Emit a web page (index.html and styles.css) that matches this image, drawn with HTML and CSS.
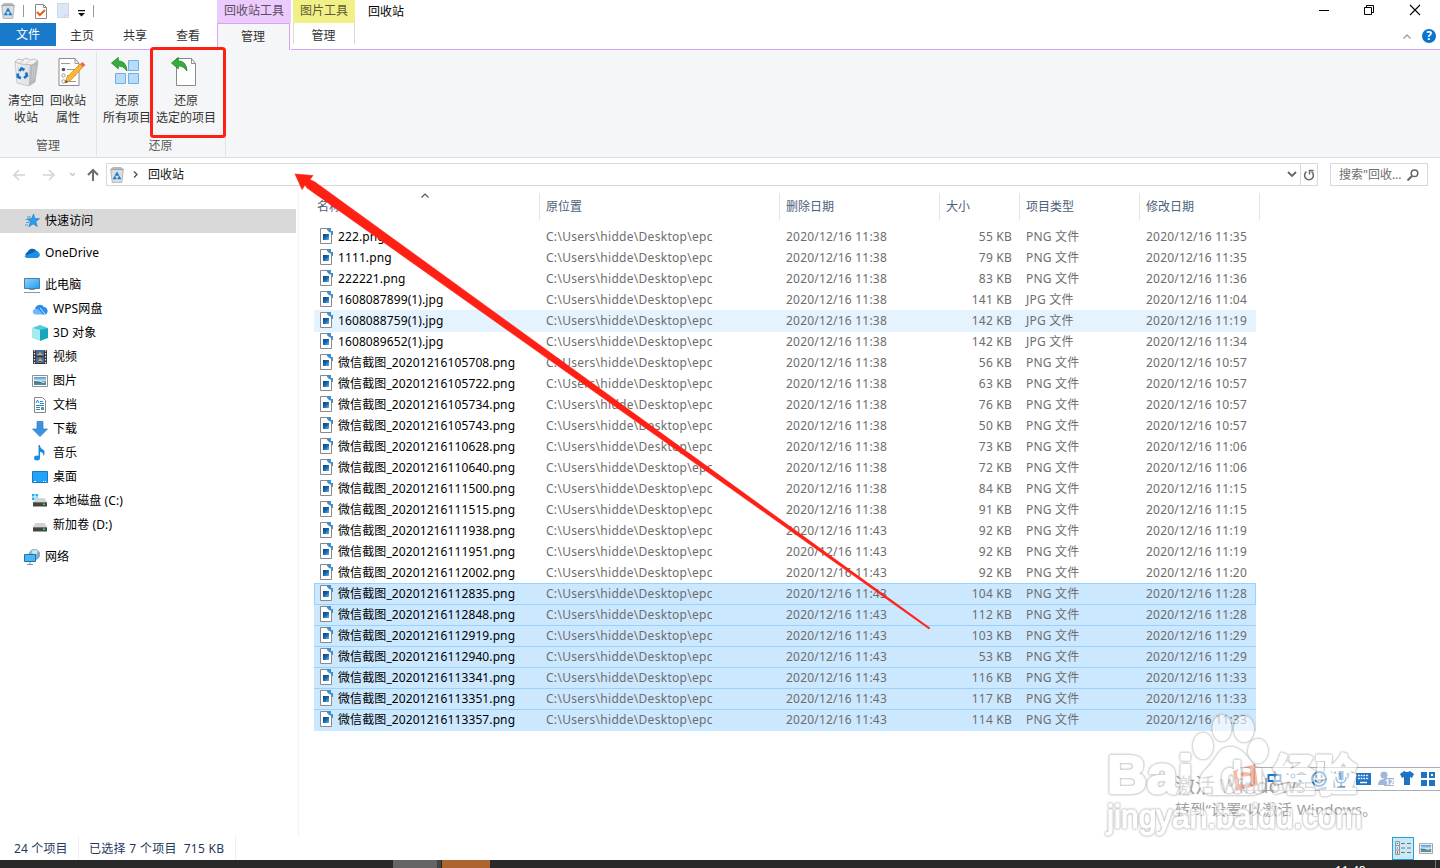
FILE: index.html
```html
<!DOCTYPE html>
<html lang="zh-CN">
<head>
<meta charset="utf-8">
<title>回收站</title>
<link rel="stylesheet" href="styles.css">
</head>
<body>
<svg class="defs" width="0" height="0">
  <defs>
    <linearGradient id="g-sky" x1="0" y1="0" x2="1" y2="1"><stop offset="0" stop-color="#8fd6ff"/><stop offset="1" stop-color="#1d9bf0"/></linearGradient>
    <linearGradient id="g-pic" x1="0" y1="0" x2="0" y2="1"><stop offset="0" stop-color="#4a94dd"/><stop offset=".5" stop-color="#cfe6f6"/><stop offset=".6" stop-color="#4c7a78"/><stop offset="1" stop-color="#4a90bd"/></linearGradient>
    <linearGradient id="g-file" x1="0" y1="0" x2="1" y2="1"><stop offset="0" stop-color="#0b3f7c"/><stop offset=".5" stop-color="#1767ad"/><stop offset="1" stop-color="#62b5e8"/></linearGradient>
    <linearGradient id="g-bin" x1="0" y1="0" x2="1" y2="0"><stop offset="0" stop-color="#eef0f1"/><stop offset=".6" stop-color="#dfe2e4"/><stop offset="1" stop-color="#a9adb0"/></linearGradient>
    <symbol id="file" viewBox="0 0 14 16">
      <path d="M.5.5h8l3 3v12H.5z" fill="#fff" stroke="#8a8a8a"/>
      <path d="M3 6h6v6H3z" fill="url(#g-file)"/>
      <path d="M7 0h4v3h2v4h-1V5L9 4 7 2z" fill="#3f8fce"/>
    </symbol>
    <symbol id="bin" viewBox="0 0 14 16">
      <path d="M.7 2.5h12.6L11.8 15.4H2.2z" fill="#dcdfe1" stroke="#a5a9ac" stroke-width=".8"/>
      <path d="M.6 2.6 3 .6h8l2.4 2z" fill="#b9bcbe" stroke="#999" stroke-width=".6"/>
      <path d="m7 5 2 3.500H5zM4.800 9 6.500 12H3zM9.200 9 11 12H7.600z" fill="#1c7fd0" stroke="#1c7fd0" stroke-width=".6"/>
    </symbol>
    <symbol id="picture" viewBox="0 0 16 12">
      <path d="M.5.5h15v11H.5z" fill="#fff" stroke="#909090"/>
      <path d="M2 2h12v8H2z" fill="url(#g-pic)"/><path d="M2 5q5 0 12 3H2z" fill="#d8edf7"/><path d="M2 6q6 0 9 2H2z" fill="#4b7b70"/>
    </symbol>
    <symbol id="drive" viewBox="0 0 14 9">
      <path d="M2.500 0h9L14 4H0z" fill="#d4d4d4"/><path d="M0 4h14v4.500H0z" fill="#444"/><path d="M0 4h14v1H0z" fill="#777"/><path d="M10 5.500h2v1.500h-2z" fill="#39e24a"/>
    </symbol>
    <symbol id="undo" viewBox="0 0 17 15">
      <path d="M.5 6 7.300.500V4Q15 3.500 16 14 12.500 8.500 7.300 8.800v3z" fill="#35ad3b" stroke="#168321" stroke-width=".8"/>
    </symbol>
  </defs>
</svg>

<div class="window">
  <header class="caption">
    <div class="caption-left">
      <div class="quick">
        <svg class="q-bin" width="14" height="16"><use href="#bin"/></svg>
        <i class="q-sep"></i>
        <svg class="q-check" width="12" height="15" viewBox="0 0 12 15"><path d="M.5.5h8l3 3v11H.5z" fill="#fff" stroke="#888"/><path d="M8.500.500v3h3" fill="none" stroke="#888"/><path d="m2 8 2.800 3L10 6" fill="none" stroke="#ee5a16" stroke-width="2"/></svg>
        <svg class="q-page" width="13" height="16" viewBox="0 0 13 16"><path d="M.5.5h11v14H.5z" fill="#dbe7f6" stroke="#c9d8ec"/><path d="M8 15v-3h4" fill="#eef4fb" stroke="#c0cde0"/></svg>
        <svg class="q-drop" width="7" height="7" viewBox="0 0 7 7"><path d="M0 0h7v1.300H0zM0 3h7L3.500 6.500z" fill="#111"/></svg>
        <i class="q-sep last"></i>
      </div>
      <nav class="tabs"><a class="tab file">文件</a><a class="tab">主页</a><a class="tab">共享</a><a class="tab">查看</a></nav>
    </div>
    <div class="context bin-tools"><div class="context-title">回收站工具</div><a class="context-tab">管理</a></div>
    <div class="context pic-tools"><div class="context-title">图片工具</div><a class="context-tab">管理</a></div>
    <div class="caption-right">
      <div class="title-row">
        <span class="title">回收站</span>
        <svg class="controls" width="102" height="12" viewBox="0 0 102 12" fill="none" stroke="#000" stroke-width="1"><path d="M0 6.500h10"/><path d="M45.500 3.500h7v7h-7zM47.500 3.500v-2h7v7h-2"/><path d="m91 1 10 10M101 1 91 11" stroke-width="1.100"/></svg>
      </div>
      <div class="help-row">
        <svg width="8" height="5" viewBox="0 0 8 5"><path d="m.5 4.500 3.500-3.500 3.500 3.500" fill="none" stroke="#a0a0a0" stroke-width="1.400"/></svg>
        <span class="help">?</span>
      </div>
    </div>
  </header>

  <section class="ribbon">
    <div class="group manage">
      <div class="items">
        <div class="item empty-bin">
          <svg width="28" height="30" viewBox="0 0 28 30"><path d="m3 5 15 2 8-3-3 21-6 4-12-3z" fill="url(#g-bin)" stroke="#b4b7ba" stroke-width=".7"/><path d="m18 7 8-3-3 21-6 4z" fill="#b5b9bc"/><path d="m3 5 3-3 5 1 3-2 4 2 4-1 4 2-6 4-11-1z" fill="#f1f1f1" stroke="#a8a8a8" stroke-width=".7"/><path d="m8 6 4-3m2 4 3-3m4 5-1 14m3-15-1 13M6 9l2 14" stroke="#c9ccce" fill="none"/><path d="m7.500 14 2-2.500 3 1.500M14 15.500l1 3-3 2.500M9 21l-3-1-.500-3.500" fill="none" stroke="#1673c8" stroke-width="2.600"/></svg>
          <span>清空回<br>收站</span>
        </div>
        <div class="item bin-props">
          <svg width="28" height="30" viewBox="0 0 28 30"><path d="M1 1.500h16l4 5v22H1z" fill="#fff" stroke="#8b8b8b"/><path d="M17 1.500v5h4M3 6.500h9M9 12.500h9M9 18.500h9M9 24.500h9" stroke="#999" fill="none"/><circle cx="5.500" cy="12.500" r="1.800" fill="#555"/><circle cx="5.500" cy="18.500" r="1.700" fill="none" stroke="#999"/><circle cx="5.500" cy="24.500" r="1.700" fill="none" stroke="#999"/><path d="m7 26 2-6L22 7l3 3-13 14z" fill="#f6b936" stroke="#d58a1c" stroke-width=".7"/><path d="m22 7 2.500-2 3 3-2.500 2z" fill="#e36a56"/><path d="m7 26 1-3 2 2z" fill="#444"/></svg>
          <span>回收站<br>属性</span>
        </div>
      </div>
      <div class="group-name">管理</div>
    </div>
    <div class="group restore">
      <div class="items">
        <div class="item restore-all">
          <svg width="28" height="30" viewBox="0 0 28 30"><path d="M17.500 3.500h10v10h-10zM4.500 16.500h10v10h-10zM17.500 16.500h10v10h-10z" fill="#b6dcf8" stroke="#72afe0"/><use href="#undo" x="0" y="0" width="17" height="15"/></svg>
          <span>还原<br>所有项目</span>
        </div>
        <div class="item restore-one">
          <svg width="27" height="30" viewBox="0 0 27 30"><path d="M5.500 1.500h15l4 5v22h-19z" fill="#fff" stroke="#8b8b8b"/><path d="M20.500 1.500v5h4" fill="none" stroke="#8b8b8b"/><use href="#undo" x="0" y="0" width="17" height="15"/></svg>
          <span>还原<br>选定的项目</span>
        </div>
      </div>
      <div class="group-name">还原</div>
    </div>
  </section>

  <div class="address">
    <svg class="history" width="88" height="14" viewBox="0 0 88 14" fill="none"><path d="M13 7H2m5-5L2 7l5 5M31 7h11m-5-5 5 5-5 5" stroke="#d4d4d4" stroke-width="1.600"/><path d="m58 5 2.500 2.500L63 5" stroke="#c4c4c4" stroke-width="1.300"/><path d="M81 13V2m-5 5 5-5 5 5" stroke="#6d6d6d" stroke-width="2"/></svg>
    <div class="path">
      <svg width="14" height="16"><use href="#bin"/></svg>
      <svg class="crumb" width="5" height="7" viewBox="0 0 5 7"><path d="m1 .5 3 3-3 3" fill="none" stroke="#555" stroke-width="1.400"/></svg>
      <span>回收站</span>
      <svg class="expand" width="10" height="7" viewBox="0 0 10 7"><path d="m1 1 4 4 4-4" fill="none" stroke="#666" stroke-width="1.800"/></svg>
      <div class="refresh"><svg width="12" height="12" viewBox="0 0 12 12"><path d="M8.500 2.700A4.400 4.400 0 1 1 3.500 2.700" fill="none" stroke="#6a6a6a" stroke-width="1.600"/><path d="M1.500 1.500h4v4" fill="none" stroke="#6a6a6a" stroke-width="1.500"/></svg></div>
    </div>
    <div class="search"><span>搜索"回收...</span><svg width="12" height="12" viewBox="0 0 12 12" fill="none" stroke="#666"><circle cx="7.500" cy="4.300" r="3.300" stroke-width="1.500"/><path d="m5 7-4.500 4.500" stroke-width="2"/></svg></div>
  </div>

  <main class="body">
    <aside class="nav">
      <div class="node selected"><svg width="16" height="16" viewBox="0 0 16 16"><path d="m9.500 1 1.400 4.500 4.600.2-3.700 2.900 1.500 5-4.200-2.700-4.300 2.900 1.600-4.900L3 6l4.700-.5z" fill="#2c9cec" stroke="#1979c4" stroke-width=".6"/><path d="M3 4h4M1.500 6.500h3M2 9.500h3M1 12h3" stroke="#4a9bd6"/></svg>快速访问</div>
      <div class="node"><svg width="16" height="16" viewBox="0 0 16 16"><path d="M3.500 7A5 5 0 0 1 12 5.500 4 4 0 0 1 15 9l-4 4H3.500a3.200 3.200 0 0 1 0-6" fill="#0b61b9"/><path d="M8 8q4-3 6.500-.5A3 3 0 0 1 13 13H3.500Q1 13 .5 11z" fill="#1a91e2"/></svg>OneDrive</div>
      <div class="node"><svg width="16" height="16" viewBox="0 0 16 16"><path d="M.5 1.500h15v10H.5z" fill="url(#g-sky)" stroke="#4c7fa7"/><path d="M5 12.500h6M0 15.500h16" stroke="#8399ab" stroke-width="1"/></svg>此电脑</div>
      <div class="node child"><svg width="16" height="16" viewBox="0 0 16 16"><path d="M3 8a5 5 0 0 1 9-2 4 4 0 0 1 1.500 7.500H10L5 8z" fill="#2c8cf0"/><path d="M3 8q3-1 5 2l3 3.500H3A2.800 2.800 0 0 1 3 8" fill="#70b8fa"/><path d="m8 7 5 6" stroke="#fff" stroke-width=".8"/></svg>WPS网盘</div>
      <div class="node child"><svg width="16" height="16" viewBox="0 0 16 16"><path d="m0 3 8-3 8 3-8 3z" fill="#56c9d8"/><path d="m0 3 8 2v11l-8-3z" fill="#a4ecee"/><path d="m16 3-8 2v11l8-3z" fill="#16a7bb"/></svg>3D 对象</div>
      <div class="node child"><svg width="16" height="16" viewBox="0 0 16 16"><path d="M1 1h14v14H1z" fill="#333"/><path d="M4 1h8v6H4zM4 8h8v6H4z" fill="#426da8"/><path d="m5 6 3-3 3 3zM6 12l2-3 3 3z" fill="#e0a237"/><path d="M2.500 1v14M13.500 1v14" stroke="#eee" stroke-width="1.200" stroke-dasharray="1.500 1.500"/></svg>视频</div>
      <div class="node child"><svg width="16" height="12"><use href="#picture"/></svg>图片</div>
      <div class="node child"><svg width="16" height="16" viewBox="0 0 16 16"><path d="M2.500.5h8l3 3v12h-11z" fill="#fff" stroke="#888"/><path d="m4 6 1.500-3L7 6M8 4.500h3M8 6.500h4M4 8.500h8M4 10.500h4M4 12.500h4" stroke="#2a86cb" fill="none"/><path d="M9 10h3v3H9z" fill="#5c968b"/></svg>文档</div>
      <div class="node child"><svg width="16" height="16" viewBox="0 0 16 16"><path d="M5 .5h6V8h4.500L8 15.500.5 8H5z" fill="#3b93df" stroke="#297bc4" stroke-width=".7"/></svg>下载</div>
      <div class="node child"><svg width="16" height="16" viewBox="0 0 16 16"><ellipse cx="5" cy="13" rx="3" ry="2.500" fill="#168de2"/><path d="M6.500 0H8q0 3 3 4.500 3 2.500.5 6.500 0-4-3.500-4v6H6.500z" fill="#168de2"/></svg>音乐</div>
      <div class="node child"><svg width="16" height="12" viewBox="0 0 16 12"><path d="M.5.500h15v11H.5z" fill="#22a3fa" stroke="#187ac3"/><path d="M2 10.500h2m7 0h1m1 0h1" stroke="#fff"/></svg>桌面</div>
      <div class="node child"><svg width="16" height="16" viewBox="0 0 16 16"><path d="M0 1h2.500v2.500H0zM3.500 1H6v2.500H3.500zM0 4.500h2.500V7H0zM3.500 4.500H6V7H3.500z" fill="#18b4f1"/><use href="#drive" x="1" y="5" width="14" height="9"/></svg>本地磁盘 (C:)</div>
      <div class="node child"><svg width="16" height="16" viewBox="0 0 16 16"><use href="#drive" x="1" y="6" width="14" height="9"/></svg>新加卷 (D:)</div>
      <div class="node network"><svg width="16" height="16" viewBox="0 0 16 16"><circle cx="10.500" cy="5.500" r="5.300" fill="#78b2d0" stroke="#5a87a4" stroke-width=".5"/><path d="M7 3q3-4 7-1l-2 4-3-1z" fill="#c9e5ec"/><path d="M.5 5.500h11v7H.5z" fill="#48b6fb" stroke="#28709e"/><path d="M3 15.500h6M6 13v2" stroke="#7896a8"/></svg>网络</div>
    </aside>

    <section class="files">
      <div class="head">
        <span>名称</span><span>原位置</span><span>删除日期</span><span>大小</span><span>项目类型</span><span>修改日期</span>
        <svg class="sort" width="8" height="5" viewBox="0 0 8 5"><path d="M.5 4.500 4 1l3.500 3.500" fill="none" stroke="#555" stroke-width="1.200"/></svg>
      </div>
      <div class="rows">
        <div class="row"><svg><use href="#file"/></svg><b>222.png</b><span class="loc">C:\Users\hidde\Desktop\epc</span><span>2020/12/16 11:38</span><span class="size">55 KB</span><span>PNG 文件</span><span>2020/12/16 11:35</span></div>
        <div class="row"><svg><use href="#file"/></svg><b>1111.png</b><span class="loc">C:\Users\hidde\Desktop\epc</span><span>2020/12/16 11:38</span><span class="size">79 KB</span><span>PNG 文件</span><span>2020/12/16 11:35</span></div>
        <div class="row"><svg><use href="#file"/></svg><b>222221.png</b><span class="loc">C:\Users\hidde\Desktop\epc</span><span>2020/12/16 11:38</span><span class="size">83 KB</span><span>PNG 文件</span><span>2020/12/16 11:36</span></div>
        <div class="row"><svg><use href="#file"/></svg><b>1608087899(1).jpg</b><span class="loc">C:\Users\hidde\Desktop\epc</span><span>2020/12/16 11:38</span><span class="size">141 KB</span><span>JPG 文件</span><span>2020/12/16 11:04</span></div>
        <div class="row hover"><svg><use href="#file"/></svg><b>1608088759(1).jpg</b><span class="loc">C:\Users\hidde\Desktop\epc</span><span>2020/12/16 11:38</span><span class="size">142 KB</span><span>JPG 文件</span><span>2020/12/16 11:19</span></div>
        <div class="row"><svg><use href="#file"/></svg><b>1608089652(1).jpg</b><span class="loc">C:\Users\hidde\Desktop\epc</span><span>2020/12/16 11:38</span><span class="size">142 KB</span><span>JPG 文件</span><span>2020/12/16 11:34</span></div>
        <div class="row"><svg><use href="#file"/></svg><b>微信截图_20201216105708.png</b><span class="loc">C:\Users\hidde\Desktop\epc</span><span>2020/12/16 11:38</span><span class="size">56 KB</span><span>PNG 文件</span><span>2020/12/16 10:57</span></div>
        <div class="row"><svg><use href="#file"/></svg><b>微信截图_20201216105722.png</b><span class="loc">C:\Users\hidde\Desktop\epc</span><span>2020/12/16 11:38</span><span class="size">63 KB</span><span>PNG 文件</span><span>2020/12/16 10:57</span></div>
        <div class="row"><svg><use href="#file"/></svg><b>微信截图_20201216105734.png</b><span class="loc">C:\Users\hidde\Desktop\epc</span><span>2020/12/16 11:38</span><span class="size">76 KB</span><span>PNG 文件</span><span>2020/12/16 10:57</span></div>
        <div class="row"><svg><use href="#file"/></svg><b>微信截图_20201216105743.png</b><span class="loc">C:\Users\hidde\Desktop\epc</span><span>2020/12/16 11:38</span><span class="size">50 KB</span><span>PNG 文件</span><span>2020/12/16 10:57</span></div>
        <div class="row"><svg><use href="#file"/></svg><b>微信截图_20201216110628.png</b><span class="loc">C:\Users\hidde\Desktop\epc</span><span>2020/12/16 11:38</span><span class="size">73 KB</span><span>PNG 文件</span><span>2020/12/16 11:06</span></div>
        <div class="row"><svg><use href="#file"/></svg><b>微信截图_20201216110640.png</b><span class="loc">C:\Users\hidde\Desktop\epc</span><span>2020/12/16 11:38</span><span class="size">72 KB</span><span>PNG 文件</span><span>2020/12/16 11:06</span></div>
        <div class="row"><svg><use href="#file"/></svg><b>微信截图_20201216111500.png</b><span class="loc">C:\Users\hidde\Desktop\epc</span><span>2020/12/16 11:38</span><span class="size">84 KB</span><span>PNG 文件</span><span>2020/12/16 11:15</span></div>
        <div class="row"><svg><use href="#file"/></svg><b>微信截图_20201216111515.png</b><span class="loc">C:\Users\hidde\Desktop\epc</span><span>2020/12/16 11:38</span><span class="size">91 KB</span><span>PNG 文件</span><span>2020/12/16 11:15</span></div>
        <div class="row"><svg><use href="#file"/></svg><b>微信截图_20201216111938.png</b><span class="loc">C:\Users\hidde\Desktop\epc</span><span>2020/12/16 11:43</span><span class="size">92 KB</span><span>PNG 文件</span><span>2020/12/16 11:19</span></div>
        <div class="row"><svg><use href="#file"/></svg><b>微信截图_20201216111951.png</b><span class="loc">C:\Users\hidde\Desktop\epc</span><span>2020/12/16 11:43</span><span class="size">92 KB</span><span>PNG 文件</span><span>2020/12/16 11:19</span></div>
        <div class="row"><svg><use href="#file"/></svg><b>微信截图_20201216112002.png</b><span class="loc">C:\Users\hidde\Desktop\epc</span><span>2020/12/16 11:43</span><span class="size">92 KB</span><span>PNG 文件</span><span>2020/12/16 11:20</span></div>
        <div class="row picked focus"><svg><use href="#file"/></svg><b>微信截图_20201216112835.png</b><span class="loc">C:\Users\hidde\Desktop\epc</span><span>2020/12/16 11:43</span><span class="size">104 KB</span><span>PNG 文件</span><span>2020/12/16 11:28</span></div>
        <div class="row picked"><svg><use href="#file"/></svg><b>微信截图_20201216112848.png</b><span class="loc">C:\Users\hidde\Desktop\epc</span><span>2020/12/16 11:43</span><span class="size">112 KB</span><span>PNG 文件</span><span>2020/12/16 11:28</span></div>
        <div class="row picked"><svg><use href="#file"/></svg><b>微信截图_20201216112919.png</b><span class="loc">C:\Users\hidde\Desktop\epc</span><span>2020/12/16 11:43</span><span class="size">103 KB</span><span>PNG 文件</span><span>2020/12/16 11:29</span></div>
        <div class="row picked"><svg><use href="#file"/></svg><b>微信截图_20201216112940.png</b><span class="loc">C:\Users\hidde\Desktop\epc</span><span>2020/12/16 11:43</span><span class="size">53 KB</span><span>PNG 文件</span><span>2020/12/16 11:29</span></div>
        <div class="row picked"><svg><use href="#file"/></svg><b>微信截图_20201216113341.png</b><span class="loc">C:\Users\hidde\Desktop\epc</span><span>2020/12/16 11:43</span><span class="size">116 KB</span><span>PNG 文件</span><span>2020/12/16 11:33</span></div>
        <div class="row picked"><svg><use href="#file"/></svg><b>微信截图_20201216113351.png</b><span class="loc">C:\Users\hidde\Desktop\epc</span><span>2020/12/16 11:43</span><span class="size">117 KB</span><span>PNG 文件</span><span>2020/12/16 11:33</span></div>
        <div class="row picked"><svg><use href="#file"/></svg><b>微信截图_20201216113357.png</b><span class="loc">C:\Users\hidde\Desktop\epc</span><span>2020/12/16 11:43</span><span class="size">114 KB</span><span>PNG 文件</span><span>2020/12/16 11:33</span></div>
      </div>
    </section>
  </main>

  <footer class="status">
    <span class="total">24 个项目</span><span class="chosen">已选择 7 个项目&nbsp; 715 KB</span>
    <div class="views">
      <span class="details"><svg width="18" height="14" viewBox="0 0 18 14" fill="none"><path d="M1.500.500h4v13h-4zM1.500 4.500h4M1.500 9h4" stroke="#999"/><path d="M7 2.500h4m2 0h4M7 7h4m2 0h4M7 11.500h4m2 0h4" stroke="#777"/><path d="M3 2.500h1" stroke="#274"/><path d="M3 7h1" stroke="#27e"/><path d="M3 11.500h1" stroke="#e22" stroke-width="2"/></svg></span>
      <svg class="thumbs" width="14" height="11"><use href="#picture"/></svg>
    </div>
  </footer>
  <div class="taskbar"><i class="task-grey"></i><i class="task-edge"></i><i class="task-orange"></i><span class="clock">11:48</span><i class="show-desktop"></i></div>
</div>

<div class="ime">
  <svg width="206" height="32" viewBox="0 0 206 32">
    <path d="M1 7 23 0l3 21-22 6z" fill="#ec5422"/><path d="M19 7Q7 4 7 10t10 4q2 6-10 4" fill="none" stroke="#fff" stroke-width="4"/>
    <g fill="none" stroke="#1e73c3" stroke-width="2">
      <path d="M36.500 11h12v6h-12zM43 7v14"/>
      <circle cx="87" cy="15" r="7"/><path d="M83 16q4 6 8 0M84.500 11v3M89.500 11v3" stroke-width="1.600"/>
      <path d="M104 13q0 6 5 6t5-6M109 19v4M105 23h8" stroke-width="1.600"/>
    </g>
    <circle cx="61" cy="12" r="2" fill="none" stroke="#1e73c3"/><path d="m67 16 2 2-2 3" fill="none" stroke="#1e73c3" stroke-width="2"/>
    <path d="M106.500 7h5v9h-5zM124 9h15v12h-15z" fill="#1e73c3"/>
    <path d="M126 11.500h11M126 14.500h11" stroke="#fff" stroke-width="1.500" stroke-dasharray="1.700 1"/><path d="M128 18.500h7" stroke="#fff" stroke-width="1.500"/>
    <g fill="#a2b7d7"><circle cx="152" cy="11" r="3.500"/><path d="M146 21q0-6 6-6t6 6z"/><path d="M152 14h10v8h-10z"/></g><text x="153" y="21" class="ime-num">12</text>
    <path d="m168 10 4-3q3 2 6 0l4 3-2 4-2-1v8h-6v-8l-2 1z" fill="#1e73c3"/>
    <path d="M189 8h6v6h-6zM189 16h6v6h-6zM197 16h6v6h-6z" fill="#1e73c3"/><path d="M198 9h4v4h-4z" fill="none" stroke="#1e73c3" stroke-width="2"/>
  </svg>
</div>

<div class="activate"><div class="activate-title">激活 Windows</div><div class="activate-text">转到“设置”以激活 Windows。</div></div>

<svg class="watermark" width="280" height="140" viewBox="0 0 280 140">
  <g class="mark">
    <ellipse cx="101" cy="38" rx="9" ry="12"/><ellipse cx="120" cy="20" rx="8.500" ry="12"/><ellipse cx="142" cy="21" rx="9" ry="12"/><ellipse cx="156" cy="43" rx="9" ry="11"/>
  </g>
  <path class="mark" d="M128 40c-11 0-13 13-23 22-10 9-8 23 4 24h42c13-2 14-14 6-22-11-9-15-24-29-24z"/>
  <text class="mark logo" x="5" y="85" textLength="86" lengthAdjust="spacingAndGlyphs">Bai</text>
  <text class="mark logo-du" x="119" y="84" textLength="42" lengthAdjust="spacingAndGlyphs">du</text>
  <text class="mark logo-cn" x="171" y="83" textLength="84" lengthAdjust="spacingAndGlyphs">经验</text>
  <text class="mark url" x="5" y="120" textLength="255" lengthAdjust="spacingAndGlyphs">jingyan.baidu.com</text>
</svg>

<svg class="annotation" width="1440" height="868" viewBox="0 0 1440 868">
  <rect x="151.500" y="48.500" width="73" height="88" rx="2" fill="none" stroke="#ff2015" stroke-width="3"/>
  <path d="M295 174 313 175.500 310 179.500 315 182 930 628 929 629 307 188 305 185 302 189.500z" fill="#ff2015" stroke="#ff2015" stroke-width=".6"/>
</svg>
</body>
</html>
```

FILE: styles.css
```css
* { box-sizing: border-box; }
body { margin: 0; width: 1440px; height: 868px; overflow: hidden; position: relative; background: #fff; color: #222; font: 12px/17px "Noto Sans", "Noto Sans CJK SC", sans-serif; }
svg { display: block; flex: none; }
i { display: block; flex: none; }
.defs { position: absolute; }
.window { display: flex; flex-direction: column; height: 868px; }

/* caption and tabs */
.caption { display: flex; height: 50px; flex: none; }
.caption-left { width: 217px; border-bottom: 1px solid #dca0f5; }
.quick { display: flex; height: 23px; padding: 3px 0 0 1px; align-items: flex-start; }
.q-sep { width: 1px; height: 12px; margin: 2px 0 0 8px; background: #999; }
.q-check { margin: 1px 0 0 11px; }
.q-page { margin-left: 10px; }
.q-drop { margin: 7px 0 0 8px; }
.tabs { display: flex; height: 26px; }
.tab { width: 53px; height: 23px; line-height: 25px; text-align: center; color: #333; }
.tab.file { width: 56px; background: #1979ca; color: #fff; line-height: 24px; }
.tab:nth-child(n+2) { padding-right: 1px; }
.context-title { height: 23px; line-height: 21px; text-align: center; color: #5c4a66; }
.bin-tools { width: 74px; }
.bin-tools .context-title { background: #ebcbfb; }
.context-tab { display: block; text-align: center; line-height: 25px; color: #333; padding-right: 1px; }
.bin-tools .context-tab { width: 73px; height: 27px; background: #f5f6f7; border: 1px solid #dca0f5; border-bottom: 0; }
.pic-tools { width: 64px; padding-left: 2px; border-bottom: 1px solid #dca0f5; }
.pic-tools .context-title { background: #f1f086; color: #5b5a36; }
.pic-tools .context-tab { height: 21px; border: 1px solid #d9d9d9; border-width: 0 1px; }
.caption-right { flex: 1; border-bottom: 1px solid #dca0f5; padding-left: 13px; }
.title-row { display: flex; justify-content: space-between; height: 24px; padding: 4px 19px 0 0; color: #000; }
.title { line-height: 16px; }
.help-row { display: flex; align-items: center; justify-content: flex-end; gap: 11px; padding-right: 4px; height: 24px; }
.help { width: 14px; height: 14px; border-radius: 50%; background: #0873d0; color: #fff; font-weight: 700; line-height: 14px; text-align: center; }

/* ribbon */
.ribbon { display: flex; height: 108px; flex: none; background: #f5f6f7; border-bottom: 1px solid #dadbdc; }
.group { display: flex; flex-direction: column; height: 104px; margin-top: 2px; border-right: 1px solid #e2e3e4; }
.group.manage { width: 97px; padding-left: 5px; }
.group.restore { width: 129px; padding-left: 4px; }
.items { display: flex; height: 85px; padding-top: 5px; }
.item { display: flex; flex-direction: column; align-items: center; text-align: center; gap: 5px; white-space: nowrap; color: #333; }
.item.empty-bin, .item.bin-props { width: 42px; }
.item.bin-props svg { margin-left: 7px; }
.item.restore-all { width: 52px; }
.item.restore-all svg { margin-left: -4px; }
.item.restore-one { width: 66px; }
.item.restore-one svg { margin-left: -3px; }
.group-name { text-align: center; color: #5a5a5a; margin-left: -5px; }

/* address bar */
.address { display: flex; height: 33px; flex: none; padding: 5px 0 0 12px; }
.history { margin: 5px 6px 0 0; }
.path { display: flex; align-items: center; width: 1212px; height: 23px; border: 1px solid #d9d9d9; padding-left: 3px; color: #111; }
.path span { margin-top: -1px; }
.crumb { margin: 0 10px 0 9px; }
.path .expand { margin: 0 3px 0 auto; }
.refresh { height: 21px; width: 17px; border-left: 1px solid #d9d9d9; padding: 5px 0 0 2px; }
.refresh svg { transform: scaleX(-1); }
.search { display: flex; align-items: center; justify-content: space-between; width: 98px; height: 23px; margin-left: 12px; padding: 0 8px 0 8px; border: 1px solid #d9d9d9; color: #6d6d6d; }

/* navigation tree */
.body { display: flex; height: 645px; flex: none; }
.nav { width: 299px; padding-top: 18px; border-right: 1px solid #f3f3f3; color: #000; }
.node { display: flex; align-items: center; gap: 5px; height: 24px; margin-bottom: 8px; padding-left: 24px; padding-bottom: 1px; letter-spacing: .1px; }
.node svg { margin-top: 1px; }
.node.selected { width: 296px; background: #d9d9d9; }
.node:nth-child(3), .node.child { margin-bottom: 0; }
.node.child { padding-left: 32px; }
.node.network { margin-top: 8px; }

/* file list */
.files { width: 961px; padding: 2px 0 0 15px; }
.head { position: relative; display: grid; grid-template-columns: 226px 240px 160px 80px 120px 120px; height: 27px; color: #4c607a; }
.head span { border-right: 1px solid #e5e5e5; line-height: 27px; padding-left: 6px; }
.head span:first-child { padding-left: 3px; }
.sort { position: absolute; left: 107px; top: 0; }
.rows { padding-top: 6px; width: 942px; }
.row { display: grid; grid-template-columns: 18px 208px 240px 159px 81px 120px 1fr; height: 22px; margin-bottom: -1px; padding-left: 6px; line-height: 22px; color: #6d6d6d; letter-spacing: .21px; white-space: nowrap; }
.row svg { width: 14px; height: 16px; margin-top: 2px; }
.row b { font-weight: 400; color: #000; letter-spacing: .1px; }
.row .loc { letter-spacing: .29px; }
.row .size { width: 67px; text-align: right; }
.row.hover { background: #e5f3ff; }
.row.picked { background: #cce8ff; box-shadow: inset 0 1px #99d1ff; }
.row.picked.focus { box-shadow: inset 0 0 0 1px #99d1ff; }

/* status and taskbar */
.status { display: flex; height: 24px; flex: none; color: #1e395b; line-height: 26px; padding-left: 14px; }
.total { width: 65px; margin-right: 10px; border-right: 1px solid #f0f0f0; white-space: nowrap; letter-spacing: .15px; }
.chosen { width: 147px; border-right: 1px solid #f0f0f0; white-space: nowrap; letter-spacing: .3px; }
.views { display: flex; align-items: center; margin-left: auto; gap: 5px; padding-right: 7px; }
.details { display: flex; align-items: center; justify-content: center; width: 22px; height: 23px; background: #cbe8f6; border: 1px solid #26a0da; }
.taskbar { display: flex; height: 8px; background: #292929; overflow: hidden; }
.task-grey { margin-left: 393px; width: 44px; background: #656565; }
.task-edge { width: 5px; background: #444; border-right: 1px solid #222; }
.task-orange { width: 48px; background: #ad642f; }
.clock { margin-left: auto; width: 100px; color: #fff; line-height: 21px; }
.show-desktop { width: 5px; border-left: 1px solid #777; }

/* overlays */
.activate { position: absolute; left: 1175px; top: 772px; color: #a0a0a0; white-space: nowrap; }
.activate-title { font-size: 20px; line-height: 27px; }
.activate-text { font-size: 15px; line-height: 21px; letter-spacing: .2px; }
.ime { position: absolute; left: 1240px; top: 767px; width: 200px; height: 24px; background: #fff; border: 1px solid #a6afbd; border-width: 1px 0; }
.ime svg { position: absolute; left: -8px; top: -4px; }
.ime-num { font: 700 8px "Noto Sans", sans-serif; fill: #fff; }
.watermark { position: absolute; left: 1102px; top: 708px; opacity: .6; }
.mark { fill: #fff; stroke: #fff; stroke-width: 2.5; stroke-linejoin: round; filter: drop-shadow(0 0 1px #888) drop-shadow(0 0 .5px #999); }
.logo { font: 700 54px "Liberation Sans", sans-serif; }
.logo-du { font: 700 42px "Liberation Sans", sans-serif; }
.logo-cn { font: 700 43px "Noto Sans CJK SC", sans-serif; }
.url { font: 400 33px "Liberation Sans", sans-serif; stroke-width: 1.5; }
.annotation { position: absolute; left: 0; top: 0; }
```
